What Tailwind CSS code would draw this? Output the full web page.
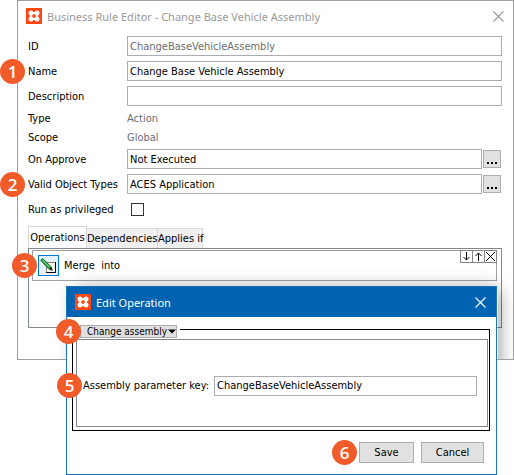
<!DOCTYPE html>
<html lang="en">
<head>
<meta charset="utf-8">
<title>Business Rule Editor</title>
<script src="https://cdn.jsdelivr.net/npm/@tailwindcss/browser@4"></script>
</head>
<body class="bg-white font-['DejaVu_Sans_Condensed','DejaVu_Sans',sans-serif] text-[11px] leading-[19px] text-black">
<svg class="hidden" aria-hidden="true">
  <symbol id="logo" viewBox="0 0 16 16">
    <rect width="16" height="16" fill="#ff4713"/>
    <path d="M5.200 5.200h5.600v5.600H5.200z" fill="none" stroke="#fff" stroke-width="2.200"/>
    <g fill="#fff"><circle cx="5" cy="5" r="2.500"/><circle cx="11" cy="5" r="2.500"/><circle cx="5" cy="11" r="2.500"/><circle cx="11" cy="11" r="2.500"/></g>
    <path d="M8 6.200L9.800 8 8 9.800 6.200 8z" fill="#ff4713"/>
  </symbol>
  <symbol id="close" viewBox="0 0 11 11"><path d="M.5.5l10 10M10.500.5l-10 10" fill="none" stroke="currentColor" stroke-width="1.100"/></symbol>
</svg>
<main class="relative min-h-screen pl-[17px]">
  <section class="relative flex h-[360px] flex-col border border-[#a0a0a0] px-[9px]">
    <header class="-ml-px flex h-[30px] items-center gap-[5px] font-['Noto_Sans',sans-serif] text-[11px] text-[#999]">
      <svg class="size-4"><use href="#logo"/></svg>
      <h1 class="flex-1">Business Rule Editor - Change Base Vehicle Assembly</h1>
      <button aria-label="Close"><svg class="size-[11px]"><use href="#close"/></svg></button>
    </header>

    <form class="mt-[5px] flex flex-col gap-[5px] pr-[2px]">
      <div class="flex h-5 items-center"><label for="id" class="w-[100px] pl-px">ID</label><input id="id" readonly value="ChangeBaseVehicleAssembly" class="h-5 min-w-0 flex-1 border border-[#abadb3] px-[2px] text-[#6d6d6d]"></div>
      <div class="relative flex h-5 items-center"><span class="absolute -left-[27px] grid size-[25px] place-items-center rounded-full bg-[#f15a29] font-['Open_Sans',sans-serif] text-[17px] font-semibold text-white">1</span><label for="name" class="w-[100px] pl-px">Name</label><input id="name" value="Change Base Vehicle Assembly" class="h-5 min-w-0 flex-1 border border-[#abadb3] px-[2px]"></div>
      <div class="flex h-5 items-center"><label for="desc" class="w-[100px] pl-px">Description</label><input id="desc" class="h-5 min-w-0 flex-1 border border-[#abadb3] px-[2px]"></div>
    </form>
    <dl class="mt-[3px] mb-[2px] grid grid-cols-[100px_1fr]">
      <dt class="pl-px">Type</dt><dd class="text-[#6d6d6d]">Action</dd>
      <dt class="pl-px">Scope</dt><dd class="text-[#6d6d7d]">Global</dd>
    </dl>
    <form class="flex flex-col gap-[5px] pr-[3px]">
      <div class="flex h-5 items-center"><label for="approve" class="w-[100px] pl-px">On Approve</label><input id="approve" value="Not Executed" class="h-5 min-w-0 flex-1 border border-[#abadb3] px-[2px]"><button type="button" aria-label="Choose approval" class="ml-px flex size-[18px] items-end justify-center gap-[2px] border border-[#adadad] bg-[#e1e1e1] pb-[3px]"><i class="size-[2px] bg-black"></i><i class="size-[2px] bg-black"></i><i class="size-[2px] bg-black"></i></button></div>
      <div class="relative flex h-5 items-center"><span class="absolute -left-[27px] grid size-[25px] place-items-center rounded-full bg-[#f15a29] font-['Open_Sans',sans-serif] text-[17px] font-semibold text-white">2</span><label for="types" class="w-[100px] pl-px">Valid Object Types</label><input id="types" value="ACES Application" class="h-5 min-w-0 flex-1 border border-[#abadb3] px-[2px]"><button type="button" aria-label="Choose object types" class="ml-px flex size-[18px] items-end justify-center gap-[2px] border border-[#adadad] bg-[#e1e1e1] pb-[3px]"><i class="size-[2px] bg-black"></i><i class="size-[2px] bg-black"></i><i class="size-[2px] bg-black"></i></button></div>
      <div class="flex h-5 items-center"><label for="priv" class="w-[104px] pl-px">Run as privileged</label><input id="priv" type="checkbox" class="size-[13px] appearance-none border border-[#333] bg-white"></div>
    </form>

    <nav class="mt-[7px] ml-px flex h-[22px] items-end leading-[20px]" role="tablist">
      <button role="tab" aria-selected="true" class="h-[22px] w-[59px] border border-b-0 border-[#d9d9d9] whitespace-nowrap">Operations</button>
      <button role="tab" class="h-5 w-[71px] border-t border-r border-[#d9d9d9] bg-[#f0f0f0] whitespace-nowrap">Dependencies</button>
      <button role="tab" class="h-5 w-[45px] border-t border-r border-[#d9d9d9] bg-[#f0f0f0] whitespace-nowrap">Applies if</button>
    </nav>
    <div class="mr-[2px] ml-px h-20 border border-[#828790] px-[4px] pl-[3px] pt-px">
      <div class="relative flex h-[31px] items-center border border-[#a0a0a0] pl-[5px]">
        <span class="absolute -left-[21px] z-10 grid size-[25px] place-items-center rounded-full bg-[#f15a29] font-['Open_Sans',sans-serif] text-[17px] font-semibold text-white">3</span>
        <button aria-label="Edit operation" class="grid size-[21px] place-items-center border border-[#0078d7] bg-[#e5f1fb]">
          <svg class="h-4 w-[17px]" viewBox="0 0 17 16"><path d="M6.500 4.500h9v10h-9z" fill="#f7f7ee" stroke="#8a8a80"/><path d="M15.500 4v10.500H6" fill="none" stroke="#000"/><path d="M.7 2.300L2.700.5l8.300 8.300 1.200 3.400-3.400-1.200z" fill="#35b34a" stroke="#0b4a18" stroke-width=".9"/><path d="M2.500 1.800l7 7" stroke="#8fe39a" stroke-width=".8"/><path d="M9.500 10.500l1.500-1.500 1.500 3.500z" fill="#111"/></svg>
        </button>
        <span class="ml-[5px] flex-1 whitespace-pre">Merge  into</span>
        <div class="-mt-px -mr-px flex self-start border border-[#838383]">
          <button aria-label="Move down" class="grid h-[11px] w-[11px] place-items-center"><svg class="size-[9px]" viewBox="0 0 9 9"><path d="M4.500 0v8M1.500 5l3 3 3-3" fill="none" stroke="#000"/></svg></button>
          <button aria-label="Move up" class="grid h-[11px] w-[12px] place-items-center border-l border-[#838383]"><svg class="size-[9px]" viewBox="0 0 9 9"><path d="M4.500 9V1M1.500 4l3-3 3 3" fill="none" stroke="#000"/></svg></button>
          <button aria-label="Remove" class="grid h-[11px] w-[12px] place-items-center border-l border-[#838383]"><svg class="size-[9px]" viewBox="0 0 9 9"><path d="M0 0l9 9M9 0L0 9" fill="none" stroke="#000"/></svg></button>
        </div>
      </div>
    </div>
    <div class="pointer-events-none absolute inset-y-0 right-0 left-[38px] overflow-hidden"><div class="absolute top-[289px] right-[15px] -bottom-20 left-[20px] shadow-[0_0_18px_rgba(0,0,0,0.45)]"></div></div>
  </section>

  <section role="dialog" aria-label="Edit Operation" class="absolute top-[286px] right-[17px] left-[66px] border border-[#1a72bb] bg-white">
    <header class="flex h-[30px] items-center gap-[5px] bg-[#0063b1] pr-[10px] pl-[8px] font-['Noto_Sans',sans-serif] text-[11px] text-white">
      <svg class="size-4"><use href="#logo"/></svg>
      <h2 class="flex-1">Edit Operation</h2>
      <button aria-label="Close"><svg class="size-[11px]"><use href="#close"/></svg></button>
    </header>
    <fieldset class="relative mt-3 mr-[6px] ml-[5px] h-[102px] border border-black pt-[9px] pr-px pb-[3px] pl-[3px]">
      <span class="absolute -top-[11px] -left-[17px] z-20 grid size-[25px] place-items-center rounded-full bg-[#f15a29] font-['Open_Sans',sans-serif] text-[17px] font-semibold text-white">4</span>
      <div class="absolute -top-[5px] -left-px bg-white pr-[3px] pl-[8px]">
        <div class="relative flex items-center">
          <select aria-label="Operation" class="h-[13px] w-[97px] appearance-none border border-[#adadad] bg-[#e1e1e1] pl-[6px] text-[10px] leading-[11px]"><option>Change assembly</option></select>
          <svg class="pointer-events-none absolute right-px h-[5px] w-[8px]" viewBox="0 0 8 5"><path d="M0 .5h8L4 4.500z"/></svg>
        </div>
      </div>
      <div class="flex h-[88px] items-center border border-[#828790] pt-[5px] pr-[10px] pl-[6px]">
        <div class="relative flex flex-1 items-center">
          <span class="absolute -left-[26px] grid size-[25px] place-items-center rounded-full bg-[#f15a29] font-['Open_Sans',sans-serif] text-[17px] font-semibold text-white">5</span>
          <label for="key" class="w-[131px] whitespace-nowrap">Assembly parameter key:</label>
          <input id="key" value="ChangeBaseVehicleAssembly" class="h-5 min-w-0 flex-1 border border-[#abadb3] px-[2px]">
        </div>
      </div>
    </fieldset>
    <footer class="flex items-center justify-end gap-[7px] pt-[11px] pr-[12px] pb-[11px]">
      <div class="relative flex items-center">
        <span class="absolute -left-[27px] grid size-[25px] place-items-center rounded-full bg-[#f15a29] font-['Open_Sans',sans-serif] text-[17px] font-semibold text-white">6</span>
        <button class="h-[21px] w-[55px] border border-[#adadad] bg-[#e1e1e1]">Save</button>
      </div>
      <button class="h-[21px] w-[63px] border border-[#adadad] bg-[#e1e1e1]">Cancel</button>
    </footer>
  </section>
</main>
</body>
</html>
